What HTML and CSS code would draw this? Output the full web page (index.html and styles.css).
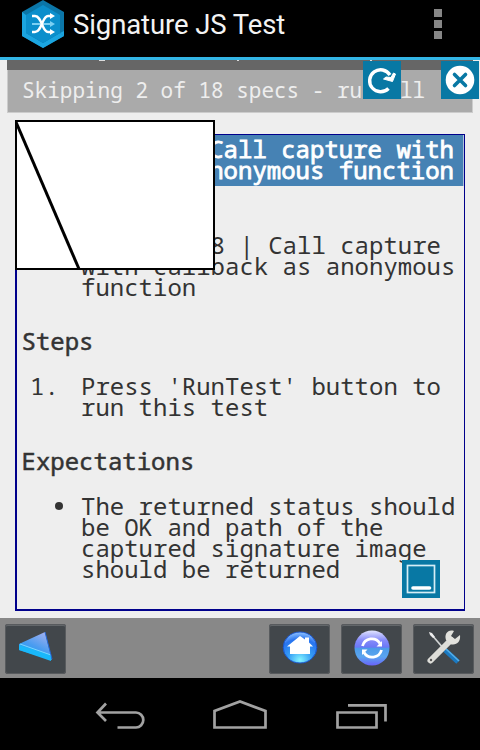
FILE: index.html
```html
<!DOCTYPE html>
<html lang="en">
<head>
<meta charset="utf-8">
<title>Signature JS Test</title>
<link rel="stylesheet" href="styles.css">
</head>
<body>
<div class="screen">
  <header class="actionbar">
    <svg class="logo" width="42" height="48" viewBox="0 0 42 48">
      <path fill="#0b76a8" d="M21 0 42 12V36L21 48 0 36V12Z"/>
      <path fill="#1ba5e0" d="M0 12 4 15V33L21 43 38 33 42 36 21 48 0 36Z"/>
      <path fill="#1ba5e0" d="M38 33 42 31V36Z"/>
      <path fill="#0b8fcc" d="M21 5 38 15V33L21 43 4 33V15Z"/>
      <path d="M10 24H30" stroke="#7bd0f3" stroke-width="2"/>
      <path fill="#7bd0f3" d="M28 21 33 24 28 27Z"/>
      <path d="M10 16H13C20 16 20 32 26 32H30M10 32H13C20 32 20 16 26 16H30" fill="none" stroke="#fff" stroke-width="2.4"/>
      <path fill="#fff" d="M28 13 33 16 28 19ZM28 29 33 32 28 35Z"/>
    </svg>
    <h1 class="title">Signature JS Test</h1>
    <div class="overflow"><i></i><i></i><i></i></div>
  </header>

  <main class="page">
    <div class="results">
      <div class="ran"></div>
      <div class="skipped">Skipping 2 of 18 specs - run all</div>
    </div>
    <section class="spec">
      <h2 class="spec-title">Call capture with<br>anonymous function</h2>
      <ul class="list about"><li>Scenario 8 | Call capture with callback as anonymous function</li></ul>
      <h3 class="heading">Steps</h3>
      <ol class="list"><li><span class="marker number">1.</span>Press 'RunTest' button to run this test</li></ol>
      <h3 class="heading">Expectations</h3>
      <ul class="list"><li><span class="marker dot"></span>The returned status should be OK and path of the captured signature image should be returned</li></ul>
    </section>

    <svg class="capture" width="200" height="150" viewBox="0 0 200 150">
      <rect x="1" y="1" width="198" height="148" fill="#fff" stroke="#000" stroke-width="2"/>
      <path d="M1 2 64 149" stroke="#000" stroke-width="3"/>
    </svg>
    <svg class="float reload" width="38" height="38" viewBox="0 0 38 38">
      <rect width="38" height="38" fill="#0878a4"/>
      <path d="M25.500 27.500A11 11 0 1 1 27 14" fill="none" stroke="#fff" stroke-width="3.4"/>
      <path d="M20.500 18 23 16 28 16.500 30.500 12 32.500 13 29.500 20.500Z" fill="#fff" stroke="#fff"/>
    </svg>
    <svg class="float close" width="38" height="38" viewBox="0 0 38 38">
      <rect width="38" height="38" fill="#0878a4"/>
      <circle cx="19" cy="19" r="14.300" fill="#fff"/>
      <path d="M13.500 13.500 24.500 24.500M24.500 13.500 13.500 24.500" stroke="#0878a4" stroke-width="3.600" stroke-linecap="round"/>
    </svg>
    <svg class="float minimize" width="38" height="38" viewBox="0 0 38 38">
      <rect width="38" height="38" fill="#0878a4"/>
      <rect x="5.500" y="5.500" width="27" height="27" fill="none" stroke="#d5edf6" stroke-width="1.700"/>
      <path d="M11 28H27.500" stroke="#fff" stroke-width="3.600" stroke-linecap="round"/>
    </svg>
  </main>

  <nav class="toolbar">
    <div class="button back">
      <svg width="61" height="50" viewBox="0 0 61 50">
        <defs><linearGradient id="tri" x1="1" y1="0" x2=".4" y2="1"><stop offset="0" stop-color="#b4b4ef"/><stop offset=".6" stop-color="#4a9cf0"/><stop offset="1" stop-color="#159bf5"/></linearGradient></defs>
        <path d="M14 20 40 8 47 36 14 26Z" fill="url(#tri)"/>
        <path d="M14 21 46 31V37L14 26Z" fill="#19b8fa"/>
        <path d="M15 20 46 31" stroke="#77d8ff"/>
        <path d="M40 8 47 35" stroke="#2467d3"/>
      </svg>
    </div>
    <div class="button">
      <svg width="61" height="50" viewBox="0 0 61 50">
        <defs><radialGradient id="orb" cy=".9" r=".9"><stop offset="0" stop-color="#85f5ff"/><stop offset=".4" stop-color="#359cf5"/><stop offset=".75" stop-color="#2874f0"/><stop offset="1" stop-color="#91c4ff"/></radialGradient></defs>
        <ellipse cx="31" cy="23.500" rx="16.800" ry="15.500" fill="url(#orb)" stroke="#1955ce"/>
        <path d="M31 12 36 15.500V13.500H40V18.500L44 22.500H41V30H21V22.500H18Z" fill="#fff"/>
      </svg>
    </div>
    <div class="button">
      <svg width="61" height="50" viewBox="0 0 61 50">
        <defs><linearGradient id="sync" x2="0" y2="1"><stop offset="0" stop-color="#e2e5ff"/><stop offset=".28" stop-color="#858afa"/><stop offset=".48" stop-color="#6a78f5"/><stop offset=".5" stop-color="#4c9ae8"/><stop offset=".75" stop-color="#5aa5ef"/><stop offset="1" stop-color="#6962fa"/></linearGradient></defs>
        <circle cx="31" cy="24" r="17.500" fill="url(#sync)"/>
        <path d="M21.500 22A9.600 9.600 0 0 1 39 19.500M40.500 26A9.600 9.600 0 0 1 23 28.500" fill="none" stroke="#fff" stroke-width="2.800"/>
        <path d="M41 17V22.500H35.500ZM21 31V25.500H26.500Z" fill="#fff"/>
      </svg>
    </div>
    <div class="button">
      <svg width="61" height="50" viewBox="0 0 61 50">
        <path d="M18 10 31 25" stroke="#d2d5d5" stroke-width="1.700"/>
        <path d="M16 8 19 9 22 13 20 14 17 11Z" fill="#eee"/>
        <path d="M32 26 45 38" stroke="#1b79c0" stroke-width="5"/>
        <path d="M33 25 46 37" stroke="#55aee8" stroke-width="1.500"/>
        <path d="M17.500 36.500 38 16" stroke="#deded9" stroke-width="6" stroke-linecap="round"/>
        <path d="M41 7C35 5 31 10 33 16L37 20C43 22 48 18 47 11L42 15 38 12Z" fill="#e2e2dd"/>
        <circle cx="18" cy="36" r="1.200" fill="#555"/>
      </svg>
    </div>
  </nav>

  <footer class="navbar">
    <svg width="480" height="72" viewBox="0 0 480 72" fill="none" stroke="#a2a2a2" stroke-width="2.700">
      <path d="M97 34.500H136C140 34.500 143.300 38 143.300 42S140 49.500 136 49.500H117.500M106 25.500 97.500 34.500 106 43"/>
      <path d="M214.500 49.500V33L240 23.500 265.500 33V49.500Z"/>
      <path d="M337.500 34.500H376.500V49.500H337.500ZM348 27.300H385.500V43.500"/>
    </svg>
  </footer>
</div>
</body>
</html>
```

FILE: styles.css
```css
* { box-sizing: border-box; }
body { margin: 0; background: #000; }
h1, h2, h3, ul, ol { margin: 0; padding: 0; font-weight: 400; }
svg { display: block; }

.screen {
  width: 480px;
  height: 750px;
  display: flex;
  flex-direction: column;
  overflow: hidden;
}
.actionbar {
  height: 60px;
  flex: none;
  display: flex;
  align-items: flex-start;
  background: #000;
  border-bottom: 3px solid #33b5e5;
  padding-left: 22px;
}
.title {
  flex: 1;
  margin-left: 9px;
  color: #f3f3f3;
  font: 400 27.500px/49px Roboto, sans-serif;
  letter-spacing: -0.1px;
}
.overflow {
  display: flex;
  flex-direction: column;
  gap: 3px;
  padding: 9px 38px 0 0;
}
.overflow i { width: 8px; height: 8px; background: #868686; }

.page {
  position: relative;
  height: 558px;
  flex: none;
  padding: 0 7px;
  background: #eee;
  color: #333;
  font-family: "Droid Sans Mono", "Noto Sans Mono", "DejaVu Sans Mono", monospace;
}
/* Thin marks are the descenders of the line scrolled under the action bar */
.ran {
  height: 10px;
  background:
    linear-gradient(#ddd, #ddd) 92px 0 / 6px 1px no-repeat,
    linear-gradient(#ddd, #ddd) 230px 0 / 2px 1px no-repeat,
    linear-gradient(#ddd, #ddd) 363px 0 / 2px 1px no-repeat,
    #666;
}
.skipped {
  height: 43px;
  padding-left: 14px;
  background: #aaa;
  border: solid #ccc;
  border-width: 0 1px 1px 1px;
  color: #eee;
  font-size: 21px;
  line-height: 41px;
  white-space: nowrap;
}
.spec {
  width: 450px;
  height: 477px;
  margin: 21px 0 0 8px;
  border: solid #00008b;
  border-width: 1px 1px 2px 2px;
  font-size: 24px;
  line-height: 21px;
}
.spec-title {
  height: 51px;
  padding: 3px 9px 0 0;
  background: #4682b4;
  border-right: 1px solid #b0c4de;
  color: #fff;
  font-size: inherit;
  text-align: right;
  -webkit-text-stroke: 0.8px #fff;
}
.heading {
  margin: 33px 0 24px 4.500px;
  font-size: inherit;
  -webkit-text-stroke: 0.5px #333;
}
.list { list-style: none; padding: 0 0 0 64px; }
.about { margin-top: 49px; }
.list li { display: block; position: relative; }
.marker { position: absolute; }
.number { left: -51px; }
.dot { left: -26px; top: 7px; width: 8px; height: 8px; border-radius: 50%; background: #333; }

.capture { position: absolute; left: 15px; top: 60px; }
.float { position: absolute; }
.reload { left: 363px; top: 1px; }
.close { left: 441px; top: 1px; }
.minimize { left: 402px; top: 500px; }

.toolbar {
  height: 60px;
  flex: none;
  display: flex;
  gap: 11px;
  padding: 6px 6px 0 5px;
  background: #888;
}
.button {
  width: 61px;
  height: 50px;
  background: #42474b;
  border-radius: 3px;
  box-shadow: inset 0 0 0 1px #585b5e, inset 0 2px #63676a;
}
.back { margin-right: auto; }
.navbar { height: 72px; flex: none; background: #000; }

.spec-title + .about { margin-top: 48px; }
```
